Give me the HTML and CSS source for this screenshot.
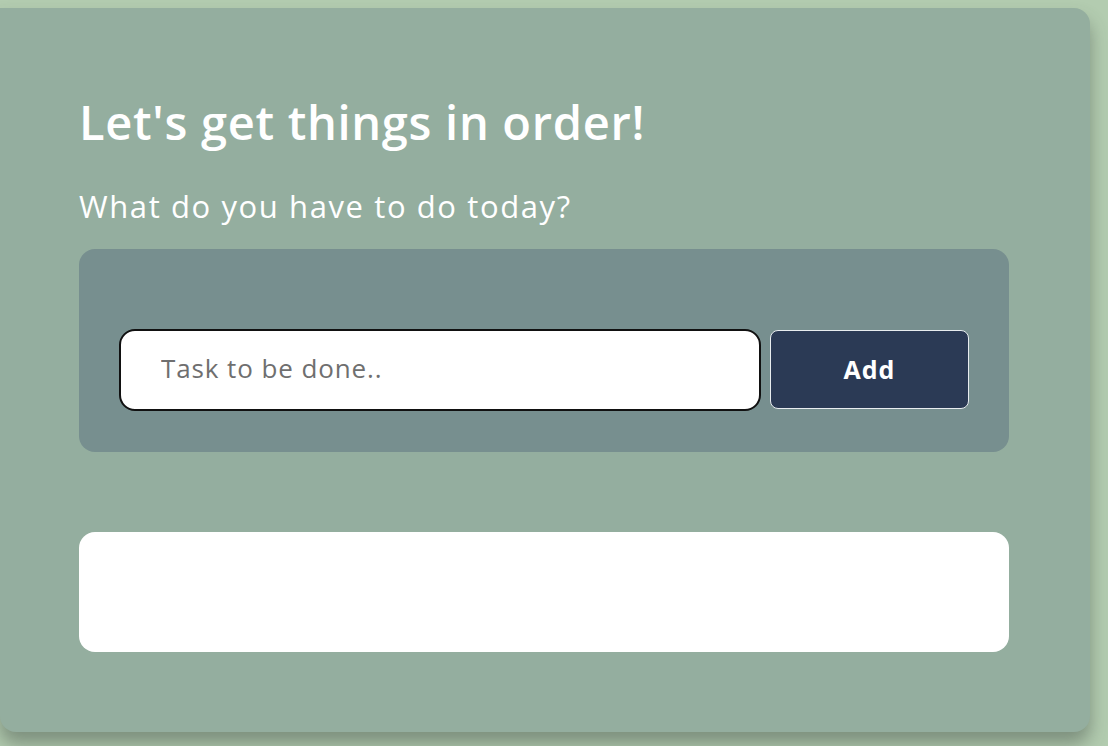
FILE: index.html
```html
<!DOCTYPE html>
<html>
<head>
<meta charset="utf-8">
<link rel="stylesheet" href="styles.css">
</head>
<body>
<main class="card">
  <h1 class="title">Let's get things in order!</h1>
  <p class="subtitle">What do you have to do today?</p>
  <form class="entry">
    <input class="task-input" type="text" placeholder="Task to be done..">
    <button class="add-btn" type="button">Add</button>
  </form>
  <section class="list"></section>
</main>
</body>
</html>
```

FILE: styles.css
```css
html, body {
  margin: 0;
  padding: 0;
}
body {
  background: #b3ccb0;
  width: 1108px;
  height: 746px;
  overflow: hidden;
  padding-top: 8px;
  box-sizing: border-box;
  font-family: "Open Sans", "Noto Sans", sans-serif;
}
.card {
  width: 1090px;
  height: 724px;
  box-sizing: border-box;
  background: #94ae9f;
  border-radius: 0 16px 16px 16px;
  box-shadow: 0 12px 18px rgba(60, 70, 65, 0.45);
  padding: 86px 81px 0 79px;
  display: flex;
  flex-direction: column;
}
.title {
  margin: 0;
  color: #fff;
  font-size: 47px;
  font-weight: 600;
  line-height: 56px;
  letter-spacing: 0.7px;
}
.subtitle {
  margin: 36px 0 0;
  color: #fff;
  font-size: 31px;
  font-weight: 400;
  line-height: 40px;
  letter-spacing: 1.6px;
}
.entry {
  margin: 23px 0 0;
  height: 203px;
  background: #778f8f;
  border-radius: 16px;
  box-sizing: border-box;
  padding: 80px 40px 40px;
  display: flex;
  align-items: flex-start;
  gap: 9px;
}
.task-input {
  width: 642px;
  height: 82px;
  box-sizing: border-box;
  border: 2px solid #111;
  border-radius: 16px;
  background: #fff;
  padding: 0 40px 4px;
  font-family: inherit;
  font-size: 26px;
  letter-spacing: 0.9px;
  color: #333;
  outline: none;
}
.task-input::placeholder {
  color: #6f6f6f;
}
.add-btn {
  margin-top: 1px;
  width: 199px;
  height: 79px;
  box-sizing: border-box;
  background: #2b3a55;
  border: 1px solid #e8ecef;
  border-radius: 8px;
  color: #fff;
  font-family: inherit;
  font-size: 25px;
  font-weight: 700;
  letter-spacing: 1px;
  padding-bottom: 3px;
}
.list {
  margin-top: 80px;
  height: 120px;
  background: #fff;
  border-radius: 16px;
}
```
